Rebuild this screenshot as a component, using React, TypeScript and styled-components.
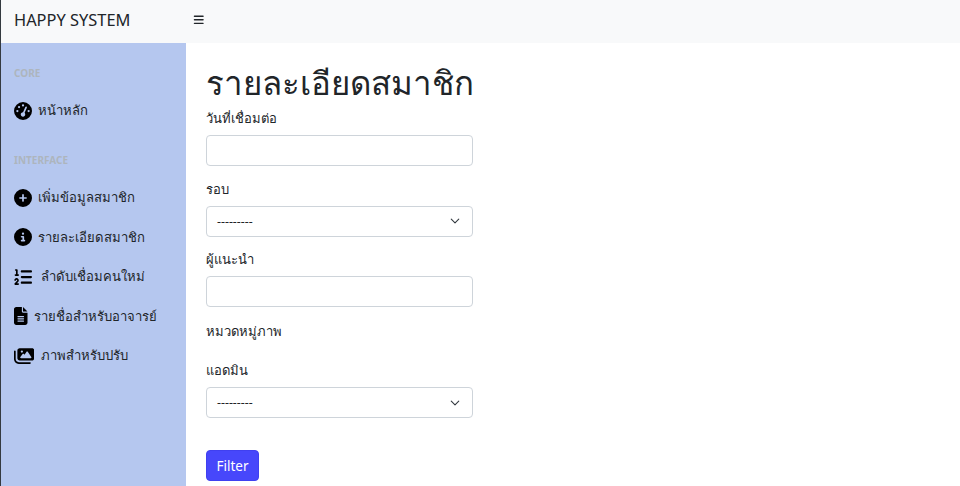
import React from 'react';
import styled, { createGlobalStyle } from 'styled-components';
import { FaGaugeHigh, FaCirclePlus, FaCircleInfo, FaListOl, FaFileLines, FaImages, FaBars } from 'react-icons/fa6';

const GlobalStyle = createGlobalStyle`
  html, body {
    margin: 0;
    padding: 0;
    height: 100%;
    overflow: hidden;
    background: #fff;
  }
  body {
    font-family: "Noto Sans", sans-serif;
    color: #212529;
  }
`;

const Page = styled.div`
  width: 960px;
  height: 486px;
  display: flex;
  flex-direction: column;
  border-left: 1px solid #343a40;
  box-sizing: border-box;
  overflow: hidden;
`;

const TopBar = styled.header`
  height: 43px;
  flex-shrink: 0;
  display: flex;
  align-items: center;
  padding-bottom: 4px;
  box-sizing: border-box;
  background: #f8f9fa;
`;

const Brand = styled.div`
  width: 185px;
  padding-left: 13px;
  box-sizing: border-box;
  font-size: 16.4px;
  color: #212529;
`;

const MenuButton = styled.button`
  border: 0;
  background: none;
  padding: 0;
  margin-left: 7px;
  display: flex;
  font-size: 11.5px;
  color: #212529;
`;

const Body = styled.div`
  flex: 1;
  display: flex;
  min-height: 0;
`;

const Sidebar = styled.nav`
  width: 185px;
  flex-shrink: 0;
  background: #b5c7ef;
  padding-top: 24px;
  box-sizing: border-box;
`;

const SectionHead = styled.div`
  font-size: 10px;
  font-weight: 700;
  line-height: 12px;
  height: 12px;
  padding-left: 13px;
  color: #adb5bd;
  margin-bottom: 12px;
`;

const NavGroup = styled.div`
  margin-bottom: 23.5px;
`;

const NavItem = styled.a<{ $gap?: number }>`
  display: flex;
  align-items: center;
  height: 39.5px;
  padding-left: 13px;
  font-size: 13.1px;
  color: #212529;
  gap: ${(p) => p.$gap ?? 6}px;
`;

const Icon = styled.span<{ $w?: number }>`
  display: flex;
  flex: none;
  color: #000;
  width: ${(p) => p.$w ?? 18}px;

  svg {
    height: 18px;
    width: 100%;
  }
`;

const Main = styled.main`
  flex: 1;
  padding: 18px 20px 0;
  box-sizing: border-box;
`;

const Title = styled.h1`
  margin: 0 0 4px;
  font-size: 33px;
  font-weight: 400;
  line-height: 43px;
  color: #212529;
  white-space: nowrap;
`;

const Form = styled.form`
  width: 267px;
`;

const Field = styled.div`
  margin-bottom: 12.5px;
`;

const Label = styled.label`
  display: block;
  font-size: 13px;
  line-height: 20px;
  height: 20px;
  margin-bottom: 7px;
`;

const TextInput = styled.input`
  display: block;
  width: 100%;
  height: 31px;
  box-sizing: border-box;
  border: 1px solid #ced4da;
  border-radius: 4px;
  background: #fff;
`;

const SelectBox = styled.div`
  height: 31px;
  box-sizing: border-box;
  border: 1px solid #ced4da;
  border-radius: 4px;
  background: #fff;
  display: flex;
  align-items: center;
  justify-content: space-between;
  padding: 0 12.5px 0 10px;
  font-size: 12.3px;
  color: #212529;
`;

const Group = styled.div`
  font-size: 13px;
  line-height: 20px;
  margin: 14px 0 19px;
`;

const FilterButton = styled.button`
  display: block;
  margin-top: 32px;
  width: 53px;
  height: 31px;
  border: 1px solid #4040f0;
  border-radius: 4px;
  background: #4747fb;
  color: #fff;
  font-family: inherit;
  font-size: 13.5px;
  padding: 0;
`;

const Chevron = () => (
  <svg width="10" height="10" viewBox="0 0 16 16" fill="none">
    <path d="M2 5l6 6 6-6" stroke="#343a40" strokeWidth="1.8" strokeLinecap="round" strokeLinejoin="round" />
  </svg>
);

const Select = () => (
  <SelectBox>
    <span>---------</span>
    <Chevron />
  </SelectBox>
);

export default function App() {
  return (
    <>
      <GlobalStyle />
      <Page>
        <TopBar>
          <Brand>HAPPY SYSTEM</Brand>
          <MenuButton><FaBars /></MenuButton>
        </TopBar>
        <Body>
          <Sidebar>
            <SectionHead>CORE</SectionHead>
            <NavGroup>
              <NavItem><Icon><FaGaugeHigh /></Icon>หน้าหลัก</NavItem>
            </NavGroup>
            <SectionHead>INTERFACE</SectionHead>
            <NavItem><Icon><FaCirclePlus /></Icon>เพิ่มข้อมูลสมาชิก</NavItem>
            <NavItem><Icon><FaCircleInfo /></Icon>รายละเอียดสมาชิก</NavItem>
            <NavItem $gap={9}><Icon><FaListOl /></Icon>ลำดับเชื่อมคนใหม่</NavItem>
            <NavItem $gap={6.5}><Icon $w={13.5}><FaFileLines /></Icon>รายชื่อสำหรับอาจารย์</NavItem>
            <NavItem $gap={6.5}><Icon $w={20.25}><FaImages /></Icon>ภาพสำหรับปรับ</NavItem>
          </Sidebar>
          <Main>
            <Title>รายละเอียดสมาชิก</Title>
            <Form>
              <Field>
                <Label>วันที่เชื่อมต่อ</Label>
                <TextInput />
              </Field>
              <Field>
                <Label>รอบ</Label>
                <Select />
              </Field>
              <Field>
                <Label>ผู้แนะนำ</Label>
                <TextInput />
              </Field>
              <Group>หมวดหมู่ภาพ</Group>
              <Field>
                <Label>แอดมิน</Label>
                <Select />
              </Field>
              <FilterButton type="button">Filter</FilterButton>
            </Form>
          </Main>
        </Body>
      </Page>
    </>
  );
}
